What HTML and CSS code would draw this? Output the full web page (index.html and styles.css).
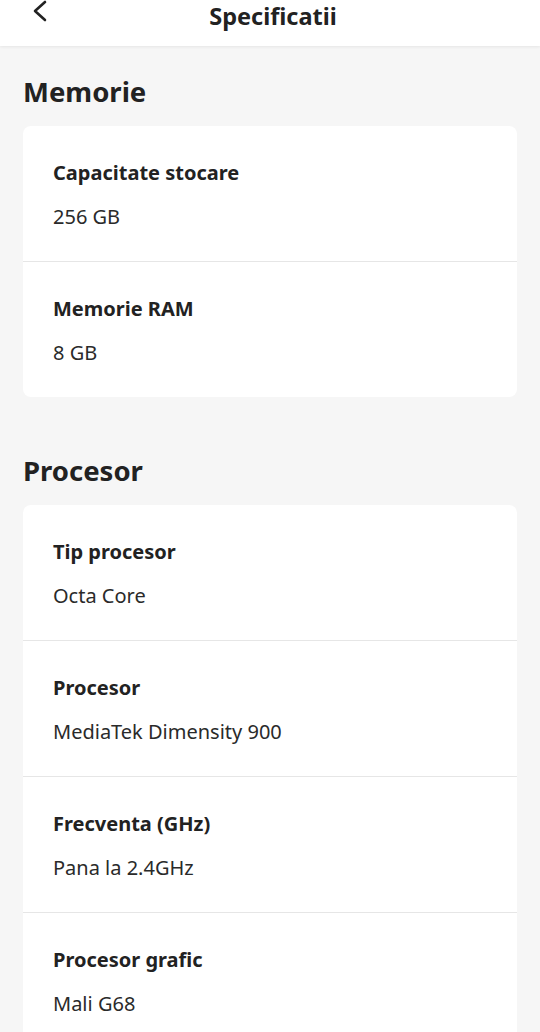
FILE: index.html
```html
<!DOCTYPE html>
<html>
<head>
  <meta charset="utf-8">
  <title>Specificatii</title>
  <link rel="stylesheet" href="styles.css">
</head>
<body>
  <!-- bara de sus -->
  <header class="topbar">
    <button class="back" aria-label="Inapoi">
      <svg width="16" height="24" viewBox="0 0 16 24"><polyline points="13,2 3,11 13,20" fill="none" stroke="#222" stroke-width="2.6" stroke-linecap="round" stroke-linejoin="round"/></svg>
    </button>
    <h1 class="topbar-title">Specificatii</h1>
  </header>

  <main class="content">
    <section class="spec-group">
      <h2 class="group-title">Memorie</h2>
      <div class="card">
        <div class="row">
          <div class="label">Capacitate stocare</div>
          <div class="value">256 GB</div>
        </div>
        <div class="row">
          <div class="label">Memorie RAM</div>
          <div class="value">8 GB</div>
        </div>
      </div>
    </section>

    <section class="spec-group">
      <h2 class="group-title">Procesor</h2>
      <div class="card">
        <div class="row">
          <div class="label">Tip procesor</div>
          <div class="value">Octa Core</div>
        </div>
        <div class="row">
          <div class="label">Procesor</div>
          <div class="value">MediaTek Dimensity 900</div>
        </div>
        <div class="row">
          <div class="label">Frecventa (GHz)</div>
          <div class="value">Pana la 2.4GHz</div>
        </div>
        <div class="row">
          <div class="label">Procesor grafic</div>
          <div class="value">Mali G68</div>
        </div>
      </div>
    </section>
  </main>
</body>
</html>
```

FILE: styles.css
```css
/* baza */
body {
  margin: 0;
  background-color: #f6f6f6;
  font-family: "Noto Sans", "Open Sans", sans-serif;
  color: #222222;
}

/* bara de sus */
.topbar {
  height: 46px;
  background-color: #ffffff;
  box-shadow: 0 1px 3px rgba(0, 0, 0, 0.07);
  display: flex;
  align-items: flex-start;
  justify-content: center;
  position: relative;
}

.back {
  position: absolute;
  left: 28px;
  top: 0;
  border: none;
  background: none;
  padding: 0 4px;
}

.topbar-title {
  margin: 0;
  padding: 4px 0 0 6px;
  font-size: 23.5px;
  line-height: 24px;
  font-weight: 700;
}

/* continut */
.content {
  padding: 0 23px;
}

.spec-group {
  padding-top: 29px;
}

.spec-group + .spec-group {
  padding-top: 57px;
}

.group-title {
  margin: 0 0 17px;
  font-size: 27.5px;
  line-height: 34px;
  font-weight: 700;
}

/* cardul cu specificatii */
.card {
  background-color: #ffffff;
  border-radius: 8px;
}

.row {
  padding: 35px 30px 32px;
}

.row + .row {
  border-top: 1px solid #e6e6e6;
}

.label {
  font-size: 20px;
  line-height: 24px;
  font-weight: 700;
}

.value {
  margin-top: 20px;
  font-size: 20px;
  line-height: 24px;
  font-weight: 400;
  color: #2a2a2a;
}
```
